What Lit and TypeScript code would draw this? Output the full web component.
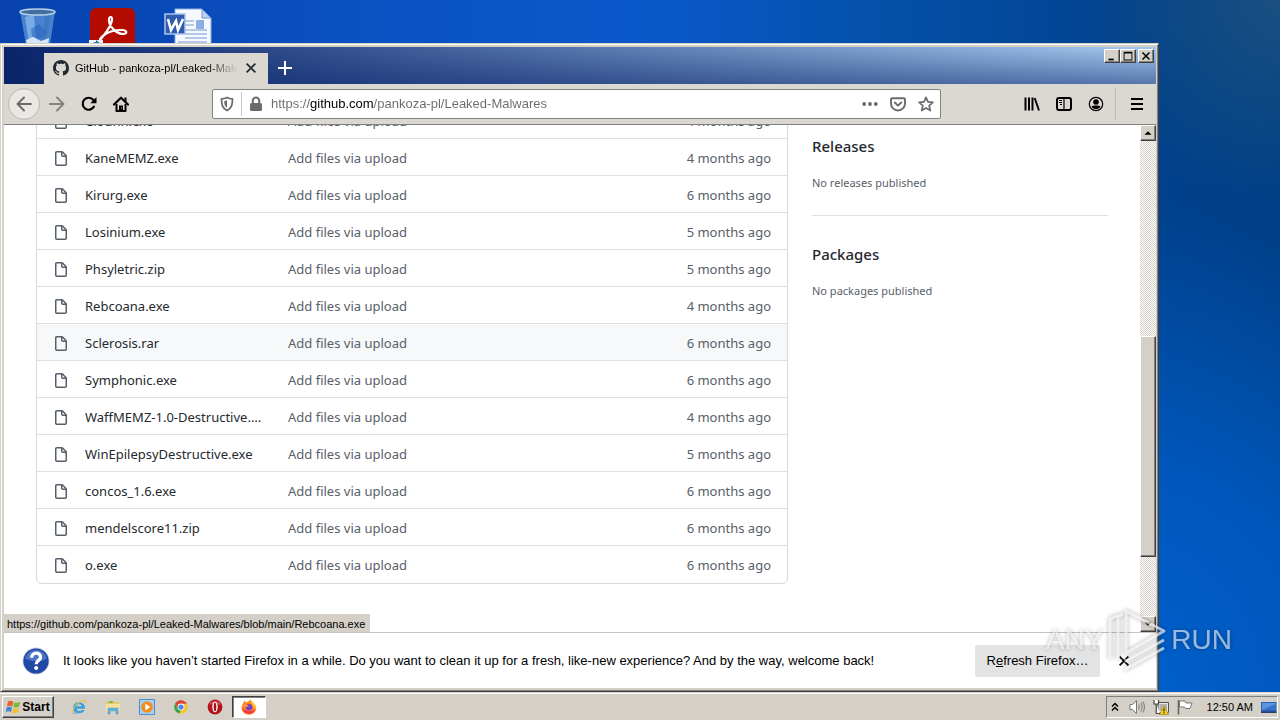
import { LitElement, css, html, svg, nothing } from 'lit';
import { customElement, property } from 'lit/decorators.js';
import { classMap } from 'lit/directives/class-map.js';

interface FileRow {
  name: string;
  age: string;
  hover?: boolean;
}

const REPO = 'https://github.com/pankoza-pl/Leaked-Malwares';

const FILES: FileRow[] = [
  { name: 'Clounn.exe', age: '4 months ago' },
  { name: 'KaneMEMZ.exe', age: '4 months ago' },
  { name: 'Kirurg.exe', age: '6 months ago' },
  { name: 'Losinium.exe', age: '5 months ago' },
  { name: 'Phsyletric.zip', age: '5 months ago' },
  { name: 'Rebcoana.exe', age: '4 months ago' },
  { name: 'Sclerosis.rar', age: '6 months ago', hover: true },
  { name: 'Symphonic.exe', age: '6 months ago' },
  { name: 'WaffMEMZ-1.0-Destructive.exe', age: '4 months ago' },
  { name: 'WinEpilepsyDestructive.exe', age: '5 months ago' },
  { name: 'concos_1.6.exe', age: '6 months ago' },
  { name: 'mendelscore11.zip', age: '6 months ago' },
  { name: 'o.exe', age: '6 months ago' },
];

// 16x16 icons, drawn in currentColor
const ICONS: Record<string, unknown> = {
  back: svg`<path d="M15 8H1.500M8 1.500L1.500 8l6.500 6.500" fill="none" stroke="currentColor" stroke-width="2" stroke-linecap="round" stroke-linejoin="round"/>`,
  forward: svg`<path d="M1 8h13.500M8 1.500L14.500 8 8 14.500" fill="none" stroke="currentColor" stroke-width="2" stroke-linecap="round" stroke-linejoin="round"/>`,
  reload: svg`<path d="M13 10.600A6 6 0 1 1 12.400 4" fill="none" stroke="currentColor" stroke-width="2.200" stroke-linecap="round"/><path d="M15.500 1v6.200H9.300z" fill="currentColor"/>`,
  home: svg`<path d="M1 8.500L8 1.700l7 6.800" fill="none" stroke="currentColor" stroke-width="2.200" stroke-linecap="round" stroke-linejoin="round"/><path d="M11.500 1.500h2V6l-2-2z" fill="currentColor"/><path d="M3.500 8v7h9V8" fill="none" stroke="currentColor" stroke-width="2" stroke-linejoin="round"/><path d="M6 9.500h4V15H6z" fill="currentColor"/><path d="M8 11.500h1v1H8z" fill="#dbd8d1"/>`,
  shield: svg`<path d="M8 1.500c2 1 3.800 1.300 5.500 1.400 0 5.600-.7 9-5.500 11.600-4.800-2.600-5.500-6-5.500-11.600C4.200 2.800 6 2.500 8 1.500z" fill="none" stroke="currentColor" stroke-width="1.800" stroke-linejoin="round"/><path d="M8 4.300v7.400C5.700 10 5.200 8 5.200 5.200 6.300 5 7.200 4.800 8 4.300z" fill="currentColor"/>`,
  lock: svg`<path d="M4.800 8V4.600a3.200 3.200 0 0 1 6.400 0V8" fill="none" stroke="currentColor" stroke-width="2"/><rect x="2" y="7" width="12" height="8" rx="1.500" fill="currentColor"/>`,
  dots: svg`<circle cx="2.200" cy="8" r="1.900" fill="currentColor"/><circle cx="8" cy="8" r="1.900" fill="currentColor"/><circle cx="13.800" cy="8" r="1.900" fill="currentColor"/>`,
  pocket: svg`<path d="M2 2.200h12a1 1 0 0 1 1 1V7.500a7 7 0 0 1-14 0V3.200a1 1 0 0 1 1-1z" fill="none" stroke="currentColor" stroke-width="1.900"/><path d="M4.800 6.500L8 9.600l3.200-3.100" fill="none" stroke="currentColor" stroke-width="1.900" stroke-linecap="round" stroke-linejoin="round"/>`,
  star: svg`<path d="M8 1.400l2 4.500 4.900.5-3.700 3.300 1.100 4.900L8 12.100l-4.300 2.500 1.100-4.900L1.100 6.400 6 5.900z" fill="none" stroke="currentColor" stroke-width="1.700" stroke-linejoin="round"/>`,
  library: svg`<path d="M1.500 1.500v13M5 1.500v13M8.500 1.500v13" stroke="currentColor" stroke-width="2" /><path d="M10.700 2l4.300 12.500" stroke="currentColor" stroke-width="1.900"/>`,
  sidebar: svg`<rect x="1" y="2" width="14" height="12" rx="2" fill="none" stroke="currentColor" stroke-width="2"/><path d="M8 2v12" stroke="currentColor" stroke-width="1.200"/><path d="M3 4.500h3M3 6.500h3M4 8.500h2" stroke="currentColor" stroke-width="1"/>`,
  account: svg`<circle cx="8" cy="8" r="6.700" fill="none" stroke="currentColor" stroke-width="1.200"/><circle cx="8" cy="6" r="2.800" fill="currentColor"/><path d="M3.600 10.800c1-1.300 2.600-1.200 4.400-1.200s3.400-.1 4.400 1.200c-1 1.500-2.600 2.300-4.400 2.300s-3.400-.8-4.400-2.300z" fill="currentColor"/>`,
  menu: svg`<path d="M2 3h12M2 8h12M2 13h12" stroke="currentColor" stroke-width="2"/>`,
  close: svg`<path d="M3 3l10 10M13 3L3 13" stroke="currentColor" stroke-width="2"/>`,
  plus: svg`<path d="M8 1v14M1 8h14" stroke="currentColor" stroke-width="2"/>`,
  file: svg`<path fill="currentColor" fill-rule="evenodd" d="M3.750 1.500a.25.25 0 00-.25.25v11.500c0 .138.112.25.25.25h8.500a.25.25 0 00.25-.25V6H9.750A1.750 1.750 0 018 4.250V1.500H3.750zm5.750.56v2.190c0 .138.112.25.25.25h2.190L9.500 2.060zM2 1.750C2 .784 2.784 0 3.750 0h5.086c.464 0 .909.184 1.237.513l3.414 3.414c.329.328.513.773.513 1.237v8.086A1.750 1.750 0 0112.250 15h-8.500A1.750 1.750 0 012 13.250V1.750z"/>`,
  github: svg`<path fill="currentColor" fill-rule="evenodd" d="M8 0C3.580 0 0 3.580 0 8c0 3.540 2.290 6.530 5.470 7.590.4.070.55-.17.55-.38 0-.19-.01-.82-.01-1.490-2.010.37-2.530-.49-2.690-.94-.09-.23-.48-.94-.82-1.130-.28-.15-.68-.52-.01-.53.63-.01 1.080.58 1.230.82.72 1.210 1.870.87 2.330.66.07-.52.28-.87.51-1.070-1.780-.2-3.640-.89-3.640-3.950 0-.87.31-1.590.82-2.150-.08-.2-.36-1.020.08-2.120 0 0 .67-.21 2.200.82.64-.18 1.320-.27 2-.27s1.360.09 2 .27c1.530-1.040 2.200-.82 2.200-.82.44 1.100.16 1.920.08 2.120.51.56.82 1.270.82 2.150 0 3.070-1.870 3.750-3.650 3.950.29.25.54.73.54 1.480 0 1.070-.01 1.930-.01 2.200 0 .21.15.46.55.38A8.013 8.013 0 0016 8c0-4.420-3.580-8-8-8z"/>`,
  minimize: svg`<path d="M4 11h6v2H4z" fill="currentColor"/>`,
  maximize: svg`<path d="M3 3h10v10H3zM4 5v7h8V5z" fill="currentColor" fill-rule="evenodd"/>`,
  winclose: svg`<path d="M4 4l8 8M12 4l-8 8" stroke="currentColor" stroke-width="1.700"/>`,
  up: svg`<path d="M8 6l4 4H4z" fill="currentColor"/>`,
  down: svg`<path d="M8 10l4-4H4z" fill="currentColor"/>`,
  question: svg`<circle cx="8" cy="8" r="7.700" fill="#c3cde4"/><circle cx="8" cy="8" r="7.200" fill="#2048a4"/><path d="M1.800 6.500a6.400 6.400 0 0 1 12.400 0C11 8.500 5 8.500 1.800 6.500z" fill="#4c74c6"/><path d="M5.500 6.200C5.500 2.700 10.600 2.700 10.600 5.800 10.600 7.600 8.100 7.700 8.100 9.800" fill="none" stroke="#fff" stroke-width="1.900"/><circle cx="8.100" cy="12" r="1.200" fill="#fff"/>`,
};

// Multi-colour icons of the taskbar
const APPS: Record<string, unknown> = {
  windows: svg`<path d="M2 2.500c2-1 3.500-.8 5.300.2L6.200 7.400C4.400 6.500 3 6.400 1 7.300z" fill="#e8602c"/><path d="M8.300 3.200c2 .9 3.800.8 6-.2l-1.200 4.800c-2 1-3.900.9-5.900 0z" fill="#7db93a"/><path d="M.8 8.300c2-.9 3.400-.7 5.200.2L4.900 13C3.200 12.100 1.800 12.100-.3 13z" fill="#3f86dc"/><path d="M7 9c2 .9 3.800.9 5.900 0l-1.200 4.600c-2 .9-3.800.8-5.800-.2z" fill="#f5c12e"/>`,
  ie: svg`<path d="M14 9.700H5.600c.2 2.600 3.900 3.200 5 1.200h3.100C11.800 15.900 2 15.300 2 8.900 2 1.300 14.400 1 14 9.700zM5.600 7.300h5.100c-.2-2.500-4.700-2.700-5.100 0z" fill="#35a0de"/><path d="M2.600 14.500C-.5 12 5 4 11 1.700c3-1 4.700 0 3.300 3" fill="none" stroke="#e8c253" stroke-width="1.200"/><path d="M2.400 14c2 .8 4-.3 5-1" fill="none" stroke="#4ab1e8" stroke-width="1"/>`,
  explorer: svg`<path d="M1 3l1-1h4l1 1h7v9H1z" fill="#e8c767"/><path d="M4 2h4v2H4z" fill="#6bc05c"/><path d="M1 5h14l-1 8H1z" fill="#f6e29a"/><path d="M3 15V9h10v6h-2v-3H5v3z" fill="#62b4dc" stroke="#4692c0" stroke-width=".5"/>`,
  media: svg`<path d="M.5.5h15v15H.5z" fill="#a5d0f3" stroke="#4c8fcf"/><circle cx="8" cy="8" r="5.800" fill="#f28a1c"/><path d="M6.300 4.500L11.300 8l-5 3.500z" fill="#fff"/>`,
  chrome: svg`<circle cx="8" cy="8" r="6.800" fill="#f6c42c"/><path d="M2.100 4.600A6.800 6.800 0 0 1 13.900 4.700H8L5.200 9.700z" fill="#dc4437"/><path d="M2.100 4.600L5 9.700l3 1.500-1.700 3.400A6.800 6.800 0 0 1 2.100 4.600z" fill="#38a455"/><circle cx="8" cy="8" r="3.400" fill="#fff"/><circle cx="8" cy="8" r="2.600" fill="#4b87e8"/>`,
  opera: svg`<circle cx="8" cy="8" r="7.400" fill="#b3141b"/><path d="M2 5.500a6.600 6.600 0 0 1 12 0z" fill="#d8484c"/><ellipse cx="8" cy="8" rx="2.700" ry="5.200" fill="#fff"/><ellipse cx="8" cy="8" rx="1.300" ry="4.300" fill="#a01018"/>`,
  firefox: svg`<path d="M2 4.500C3 3 3 2.500 3.200 1.500 4 2 4.700 2.600 5 3.400 7 2.800 8 2 9.500.5c.5 1.800 2 2.200 3.300 3.500C15.500 7 16 10 14 12.800c-3 4-9.300 3.600-12 .2C0 10.300.5 7 2 4.500z" fill="#ff8a1e"/><path d="M9.500.5c.5 1.800 2 2.200 3.300 3.500 1.800 2 2.400 4.300 1.800 6.500C13 6.500 10 5 9.500.5z" fill="#ffd43a"/><path d="M1.300 8c0 4 3 6.700 6.700 6.700 3 0 5.500-1.700 6.300-4.700C12 13 4 13.500 1.300 8z" fill="#f0324c"/><circle cx="8" cy="8.300" r="3.300" fill="#7a3fd0"/><path d="M3.300 5.500c2 0 3.400.4 4.700 1.700-2 .3-2.600 1-4.700.3z" fill="#ff9c2a"/>`,
  chevrons: svg`<path d="M5 7.500L8 4.500l3 3M5 11.500l3-3 3 3" fill="none" stroke="#000" stroke-width="1.500"/>`,
  speaker: svg`<path d="M1 5.500h2.500L7.500 1.500v13L3.500 10.500H1z" fill="#fff" stroke="#777" stroke-width="1"/><path d="M9.500 5.500c1 1.500 1 3.500 0 5M11.700 3.800c1.700 2.500 1.700 6 0 8.500M13.700 2.500c2.200 3.300 2.200 7.800 0 11" fill="none" stroke="#888" stroke-width="1.200"/>`,
  network: svg`<path d="M5 3.500h10.500v10H5z" fill="#e9e9e9" stroke="#555"/><path d="M6.500 5h7.500v7H6.500z" fill="#b5b2a8"/><path d="M1 1v4h4.500V1M3.200 5v9.500H7" fill="#fff" stroke="#444" stroke-width="1.200"/><path d="M11 7l4.500 8.500h-9z" fill="#f7d41e" stroke="#9c7d00" stroke-width=".6"/><path d="M11 9.500v3M11 13.300v1.200" stroke="#222" stroke-width="1.200"/>`,
  flag: svg`<path d="M1.500 1v14.500" stroke="#666" stroke-width="1.600"/><path d="M2.500 2h5.500l1 2h6l-2 5.500H8.500l-1-1.500h-5z" fill="#fff" stroke="#777" stroke-width="1"/>`,
  desktop: svg`<path d="M0 3h15.500v10.500H0z" fill="#2760b5"/><path d="M1 4h13.500v7H1z" fill="#5a94e0"/><path d="M1 11l13.500-6v6z" fill="#3672c8"/><path d="M0 12.500h15.500v1.500H0z" fill="#26406e"/>`,
};

const SHORTCUTS = [
  {
    label: 'Recycle Bin',
    art: svg`<path d="M6 6l6 34h24l5-34z" fill="#5e97d8" opacity=".75"/><path d="M11 12l4 26 7 0L20 10z" fill="#8fbdee" opacity=".7"/><path d="M31 12l5-2-4 28h-4z" fill="#3a72bd" opacity=".7"/><path d="M17 24l8-5 8 8-6 7-9-2z" fill="#2a66bd" opacity=".6"/><path d="M12 35l7-3 8 4 8-3-1 9H13z" fill="#d3e5f7"/><ellipse cx="23.500" cy="7" rx="17.500" ry="3" fill="#416f9f" stroke="#b9d2e9" stroke-width="1.500"/>`,
  },
  {
    label: 'Acrobat Reader',
    art: svg`<rect x="1" y="3" width="45" height="45" rx="6" fill="#b30b00"/><path d="M12 34c4-5 10-12 11-19 .5-4-3-4-3 0 0 7 8 14 14 14 5 0 4-4-1-4-7 0-14 2-18 5-4 3-5 6-3 4z" fill="none" stroke="#fff" stroke-width="2.200"/><path d="M0 35h14v9H0z" fill="#eef3fa"/><path d="M3 42v-2c0-2 2-3 4-3V35l5 4-5 4V40c-2 0-3 0-4 2z" fill="#2a6ac0"/>`,
  },
  {
    label: 'Word',
    art: svg`<path d="M11 4h27l9 9v35H11z" fill="#f5f9ff" stroke="#8fb0dd"/><path d="M38 4v9h9z" fill="#bcd2f0" stroke="#6f98d0"/><path d="M21 16h9M21 20h9M21 25h22M21 29h22M21 33h22M14 37h29" stroke="#9db9de" stroke-width="1.500"/><path d="M32 15h8v9h-8z" fill="#8caee0"/><rect x="1" y="9" width="20" height="20" fill="#2f5cae" stroke="#a9c3ea" stroke-width="1.500"/><path d="M4 14l3 11 5-9 2 9 5-11" fill="none" stroke="#fff" stroke-width="2.600"/>`,
  },
];

const icon = (name: string, size = 16) =>
  html`<svg width=${size} height=${size} viewBox="0 0 16 16" aria-hidden="true">${ICONS[name] ?? APPS[name]}</svg>`;

@customElement('repo-page')
export class RepoPage extends LitElement {
  static styles = css`
    :host {
      display: flex;
      gap: 24px;
      padding: 0 32px;
      background: #fff;
      color: #24292e;
      font: 13px/20px 'Noto Sans', 'Open Sans', sans-serif;
    }
    svg { display: block; }
    a { color: inherit; text-decoration: none; }
    .files {
      flex: 1;
      min-width: 0;
      align-self: flex-start;
      margin-top: -24px;
      padding-bottom: 1px;
      border: 1px solid #d6d9dd;
      border-radius: 6px;
      overflow: hidden;
    }
    table { width: 100%; table-layout: fixed; border-spacing: 0; }
    td { padding: 9px 0 7px; border-top: 1px solid #dcdfe3; }
    tr:first-child td { border-top: 0; }
    .hover td { background: #f6f8fa; }
    .kind { width: 32px; padding: 11px 0 7px 16px; color: #57606a; }
    .name { width: 182px; padding-right: 21px; }
    .name a { display: block; overflow: hidden; text-overflow: ellipsis; white-space: nowrap; }
    .message { color: #586069; }
    .age { width: 120px; padding-right: 16px; text-align: right; color: #586069; }
    aside { width: 296px; flex: none; margin-top: -17px; }
    section { padding: 28px 0 24px; }
    section + section { border-top: 1px solid #dcdfe3; }
    h2 { margin: 0 0 19px; font-size: 15px; line-height: 20px; font-weight: 500; }
    p { margin: 0; font-size: 11px; line-height: 16px; color: #586069; }
  `;

  render() {
    return html`
      <div class="files">
        <table>
          <tbody>
            ${FILES.map((file) => html`
              <tr class=${classMap({ hover: !!file.hover })}>
                <td class="kind">${icon('file')}</td>
                <td class="name"><a href="#${file.name}">${file.name}</a></td>
                <td class="message"><a href="#commit">Add files via upload</a></td>
                <td class="age">${file.age}</td>
              </tr>
            `)}
          </tbody>
        </table>
      </div>
      <aside>
        <section><h2>Releases</h2><p>No releases published</p></section>
        <section><h2>Packages</h2><p>No packages published</p></section>
      </aside>
    `;
  }
}

@customElement('browser-window')
export class BrowserWindow extends LitElement {
  @property() status = '';

  static styles = css`
    :host {
      display: flex;
      flex-direction: column;
      box-sizing: border-box;
      padding: 3px 2px 3px 3px;
      border: 1px solid;
      border-color: #d4d0c8 #404040 #404040 #d4d0c8;
      box-shadow: inset 1px 1px #fff, inset -1px -1px #808080;
      background: #d4d0c8;
      font: 11px/16px 'Liberation Sans', Arial, sans-serif;
      color: #000;
    }
    svg { display: block; flex: none; }
    button {
      display: flex;
      align-items: center;
      justify-content: center;
      padding: 0;
      border: 0;
      background: none;
      color: inherit;
      font: inherit;
    }
    .raised {
      background: #d4d0c8;
      border: 1px solid;
      border-color: #fff #404040 #404040 #fff;
      box-shadow: inset -1px -1px #808080;
    }

    .titlebar {
      display: flex;
      align-items: flex-end;
      height: 37px;
      background:
        linear-gradient(#0a246a00, #0a246a80),
        linear-gradient(90deg, #0a246a, #a6caf0);
    }
    .tab {
      display: flex;
      align-items: center;
      gap: 6px;
      box-sizing: border-box;
      width: 224px;
      height: 31px;
      margin-left: 40px;
      padding: 0 10px 2px 9px;
      background: #dbd8d1;
    }
    .tab .title {
      flex: 1;
      overflow: hidden;
      white-space: nowrap;
      mask-image: linear-gradient(90deg, #000 80%, transparent);
    }
    .tab svg { color: #24292e; }
    .newtab { width: 34px; height: 33px; color: #fff; }
    .controls { display: flex; align-self: flex-start; margin: 2px 2px 0 auto; }
    .controls button { width: 16px; height: 14px; }
    .controls button:last-child { margin-left: 2px; }

    .toolbar {
      display: flex;
      align-items: center;
      height: 40px;
      padding: 0 3px 0 4px;
      background: #dbd8d1;
      border-bottom: 1px solid #808080;
    }
    .toolbar button { width: 32px; height: 32px; }
    .toolbar .back {
      margin-right: 1px;
      border: 1px solid #bab7b1;
      border-radius: 50%;
      background: #eae8e4;
      color: #6c6b68;
    }
    .toolbar .forward { color: #85837e; }
    .address {
      flex: 1;
      display: flex;
      align-items: center;
      gap: 8px;
      box-sizing: border-box;
      height: 30px;
      margin: 0 75px;
      padding: 0 4px;
      border: 1px solid #85837e;
      border-radius: 2px;
      background: #fff;
      color: #6b6b6b;
    }
    .address .sep { width: 1px; height: 24px; margin: 0 -4px; background: #c8c8c8; }
    .address svg { margin: 0 2px; }
    .address input {
      flex: 1;
      min-width: 0;
      margin-left: -3px;
      padding: 0;
      border: 0;
      outline: 0;
      font: 13px/20px 'Liberation Sans', Arial, sans-serif;
      color: transparent;
      background: linear-gradient(90deg, #6b6b6b 39px, #000 39px 103px, #6b6b6b 103px);
      background-clip: text;
    }
    .toolbar .divider { width: 1px; height: 32px; margin: 0 5px 0 3px; background: #bdbab3; }

    .view { flex: 1; min-height: 0; display: flex; position: relative; overflow: hidden; background: #fff; }
    repo-page { flex: 1; min-width: 0; overflow: hidden; }
    .scrollbar {
      display: flex;
      flex-direction: column;
      width: 16px;
      background: repeating-conic-gradient(#d4d0c8 0 25%, #fff 0 50%) 0 0 / 2px 2px;
    }
    .scrollbar button { width: 16px; height: 16px; }
    .before { flex: 196; }
    .thumb { flex: 220; }
    .after { flex: 59; }
    .status {
      position: absolute;
      left: 0;
      bottom: 0;
      padding: 2px 5px 0 3px;
      background: #d4d0c8;
    }

    .notice {
      display: flex;
      align-items: center;
      gap: 8px;
      box-sizing: border-box;
      min-height: 56px;
      padding: 0 16px;
      border-top: 1px solid #c4c4c4;
      background: #fff;
      font-size: 13px;
    }
    .notice p { flex: 1; margin: 0 0 0 5px; }
    .notice svg { margin-left: 2px; }
    .notice .refresh { width: 125px; height: 32px; background: #e3e3e3; border-radius: 2px; }
    .notice .dismiss { width: 32px; height: 32px; }
    .notice .dismiss svg { margin: 0; }
  `;

  private tool(name: string, label: string, cls = '') {
    return html`<button class=${cls} aria-label=${label}>${icon(name)}</button>`;
  }

  render() {
    return html`
      <div class="titlebar">
        <div class="tab">
          ${icon('github')}
          <span class="title">GitHub - pankoza-pl/Leaked-Malwares</span>
          <button aria-label="Close tab">${icon('close', 14)}</button>
        </div>
        <button class="newtab" aria-label="New tab">${icon('plus')}</button>
        <div class="controls">
          <button class="raised" aria-label="Minimize">${icon('minimize', 14)}</button>
          <button class="raised" aria-label="Maximize">${icon('maximize', 14)}</button>
          <button class="raised" aria-label="Close">${icon('winclose', 14)}</button>
        </div>
      </div>
      <div class="toolbar">
        ${this.tool('back', 'Back', 'back')}
        ${this.tool('forward', 'Forward', 'forward')}
        ${this.tool('reload', 'Reload')}
        ${this.tool('home', 'Home')}
        <div class="address">
          ${icon('shield')}
          <span class="sep"></span>
          ${icon('lock')}
          <input type="text" aria-label="Address" .value=${REPO} />
          ${icon('dots')} ${icon('pocket')} ${icon('star')}
        </div>
        ${this.tool('library', 'Library')}
        ${this.tool('sidebar', 'Sidebars')}
        ${this.tool('account', 'Account')}
        <span class="divider"></span>
        ${this.tool('menu', 'Menu')}
      </div>
      <div class="view">
        <repo-page></repo-page>
        <div class="scrollbar">
          <button class="raised" aria-label="Scroll up">${icon('up', 14)}</button>
          <div class="before"></div>
          <div class="thumb raised"></div>
          <div class="after"></div>
          <button class="raised" aria-label="Scroll down">${icon('down', 14)}</button>
        </div>
        ${this.status ? html`<div class="status">${this.status}</div>` : nothing}
      </div>
      <div class="notice">
        ${icon('question', 28)}
        <p>It looks like you haven’t started Firefox in a while. Do you want to clean it up for a fresh, like-new experience? And by the way, welcome back!</p>
        <button class="refresh"><span>R<u>e</u>fresh Firefox…</span></button>
        <button class="dismiss" aria-label="Dismiss">${icon('close', 14)}</button>
      </div>
    `;
  }
}

@customElement('task-bar')
export class TaskBar extends LitElement {
  static styles = css`
    :host {
      display: flex;
      align-items: center;
      box-sizing: border-box;
      height: 28px;
      padding: 2px 2px 0;
      background: #d4d0c8;
      box-shadow: inset 0 1px #d4d0c8, inset 0 2px #fff;
      font: 11px/16px 'Liberation Sans', Arial, sans-serif;
      color: #000;
    }
    svg { display: block; flex: none; }
    button {
      display: flex;
      align-items: center;
      justify-content: center;
      box-sizing: border-box;
      width: 34px;
      height: 22px;
      padding: 0;
      border: 0;
      background: none;
      font: inherit;
      color: inherit;
    }
    .start {
      width: 52px;
      margin-right: 8px;
      border: 1px solid;
      border-color: #fff #404040 #404040 #fff;
      box-shadow: inset -1px -1px #808080;
      font-size: 12px;
      font-weight: 700;
    }
    .active {
      background: #fff;
      border: 1px solid;
      border-color: #404040 #fff #fff #404040;
      box-shadow: inset 1px 1px #808080;
    }
    .tray {
      display: flex;
      align-items: center;
      gap: 8px;
      box-sizing: border-box;
      height: 22px;
      margin-left: auto;
      border: 1px solid;
      border-color: #808080 #fff #fff #808080;
    }
    .tray svg:first-child { margin-right: -2px; }
    .clock { margin: 0 0 0 6px; }
  `;

  render() {
    const apps = [
      ['ie', 'Internet Explorer'],
      ['explorer', 'Windows Explorer'],
      ['media', 'Media Player'],
      ['chrome', 'Chrome'],
      ['opera', 'Opera'],
      ['firefox', 'Firefox'],
    ];
    return html`
      <button class="start">${icon('windows')}Start</button>
      ${apps.map(([name, label]) => html`
        <button class=${classMap({ active: name === 'firefox' })} aria-label=${label}>${icon(name)}</button>
      `)}
      <div class="tray">
        ${icon('chevrons')} ${icon('speaker')} ${icon('network')} ${icon('flag')}
        <time class="clock">12:50 AM</time>
        ${icon('desktop')}
      </div>
    `;
  }
}

@customElement('app-root')
export class AppRoot extends LitElement {
  static styles = css`
    :host {
      display: flex;
      flex-direction: column;
      position: relative;
      height: 100vh;
      overflow: hidden;
      background:
        radial-gradient(circle at 100% 0, #1a4f80 0, #1a4f8000 14%),
        radial-gradient(circle at 86% 96%, #0062d0 0, #0056ba 18%, #004ba400 38%),
        linear-gradient(90deg, #0742ae, #0a50c0 25%, #0b58cc 50%, #0450a8 70%, #00418c 90%, #003f86);
    }
    .shortcuts { display: flex; height: 43px; overflow: hidden; }
    .shortcut { width: 75px; padding-top: 5px; text-align: center; }
    browser-window { flex: 1; min-height: 0; margin-right: 121px; }
    .watermark {
      position: absolute;
      right: 48px;
      bottom: 47px;
      display: flex;
      align-items: center;
      gap: 4px;
      color: #ffffff99;
      font: 28px/20px 'Liberation Sans', Arial, sans-serif;
      filter: drop-shadow(0 0 2px #00000080);
      pointer-events: none;
    }
  `;

  render() {
    return html`
      <div class="shortcuts">
        ${SHORTCUTS.map((item) => html`
          <div class="shortcut">
            <svg width="48" height="48" viewBox="0 0 48 48" role="img" aria-label=${item.label}>${item.art}</svg>
          </div>
        `)}
      </div>
      <browser-window status="${REPO}/blob/main/Rebcoana.exe"></browser-window>
      <task-bar></task-bar>
      <div class="watermark">
        <span>ANY</span>
        <svg width="60" height="66" viewBox="0 0 60 66" fill="none" stroke="#ffffffa6" stroke-width="3" stroke-linejoin="round" aria-hidden="true">
          <path d="M3 52V12l9-4" />
          <path d="M11 52V10l5-3" />
          <path d="M19 46V4l38 20-38 22z" />
          <path d="M19 52v2l38-21" />
          <path d="M19 60v2l38-21" />
        </svg>
        <span>RUN</span>
      </div>
    `;
  }
}
